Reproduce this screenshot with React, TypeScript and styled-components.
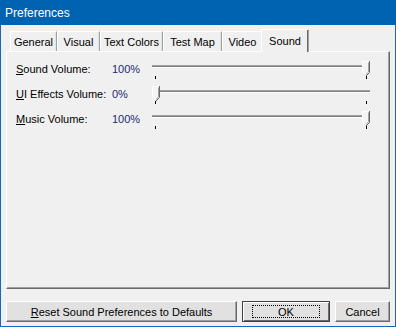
import React from "react";
import styled, { createGlobalStyle } from "styled-components";

const Global = createGlobalStyle`
    html, body { margin: 0; padding: 0; background: #f0f0f0; }
    body { font-family: "Liberation Sans", Arial, sans-serif; font-size: 11px; color: #000; }
`;

const Frame = styled.div`
    width: 396px;
    height: 327px;
    box-sizing: border-box;
    border: 1px solid #1767b4;
    border-top: none;
    background: #f0f0f0;
    display: flex;
    flex-direction: column;
`;

const TitleBar = styled.div`
    height: 27px;
    background: #0063b1;
    color: #fff;
    font-size: 12px;
    display: flex;
    align-items: center;
    padding-left: 5px;
    margin: 0 -1px;
`;

const Body = styled.div`
    flex: 1;
    display: flex;
    flex-direction: column;
    padding: 3px 5px 4px 5px;
`;

const TabStrip = styled.div`
    display: flex;
    align-items: flex-end;
    height: 23px;
    padding-left: 4px;
    position: relative;
    z-index: 1;
`;

const Tab = styled.div<{ $active?: boolean; $w: number }>`
    box-sizing: border-box;
    width: ${({ $w }) => $w}px;
    height: ${({ $active }) => ($active ? 23 : 20)}px;
    margin: ${({ $active }) => ($active ? "0 -2px -1px -2px" : "0")};
    background: #f0f0f0;
    border-top: 1px solid #fff;
    border-left: 1px solid #fff;
    border-right: 1px solid #a0a0a0;
    box-shadow: inset -1px 0 0 ${({ $active }) => ($active ? "#696969" : "#e3e3e3")};
    display: flex;
    align-items: center;
    justify-content: center;
    padding-top: ${({ $active }) => ($active ? 0 : 1)}px;
    position: relative;
    z-index: ${({ $active }) => ($active ? 2 : 1)};
`;

const Panel = styled.div`
    height: 238px;
    box-sizing: border-box;
    border-top: 1px solid #fff;
    border-left: 1px solid #fff;
    border-right: 1px solid #696969;
    border-bottom: 1px solid #696969;
    box-shadow: inset -1px -1px 0 #a0a0a0;
    padding: 9px 0 0 9px;
    display: flex;
    flex-direction: column;
    gap: 9px;
`;

const Row = styled.div`
    display: flex;
    align-items: flex-start;
    height: 16px;
`;

const Label = styled.span`
    width: 96px;
    padding-top: 2px;
`;

const Value = styled.span`
    width: 40px;
    color: #232a72;
    padding-top: 2px;
`;

const Slider = styled.div`
    position: relative;
    width: 218px;
    height: 16px;
`;

const Groove = styled.div`
    position: absolute;
    left: 0;
    right: 0;
    top: 4px;
    height: 1px;
    border-top: 1px solid #a0a0a0;
    border-bottom: 1px solid #fff;
    background: #808080;
`;

const Tick = styled.div<{ $side: "left" | "right" }>`
    position: absolute;
    top: 15px;
    ${({ $side }) => ($side === "left" ? "left: 3px;" : "right: 3px;")}
    width: 1px;
    height: 3px;
    background: #000;
`;

const Thumb = styled.svg`
    position: absolute;
    top: 0;
    width: 8px;
    height: 15px;
`;

const Mn = styled.span`
    text-decoration: underline;
`;

const Buttons = styled.div`
    margin-top: 12px;
    display: flex;
    gap: 5px;
`;

const Button = styled.button<{ $w: number; $default?: boolean }>`
    width: ${({ $w }) => $w}px;
    height: 21px;
    box-sizing: border-box;
    font: inherit;
    color: #000;
    background: #e1e1e1;
    padding: 0;
    border: 1px solid;
    border-color: ${({ $default }) =>
        $default ? "#404040" : "#fff #696969 #696969 #fff"};
    box-shadow: ${({ $default }) =>
        $default ? "inset 1px 1px 0 #fff, inset -1px -1px 0 #696969" : "inset -1px -1px 0 #a0a0a0"};
    display: flex;
    align-items: center;
    justify-content: center;
`;

const Focus = styled.span`
    border: 1px dotted #000;
    padding: 0 25px;
    height: 13px;
    box-sizing: border-box;
    display: inline-flex;
    align-items: center;
`;

function ThumbShape({ at }: { at: "min" | "max" }) {
    return (
        <Thumb viewBox="0 0 8 15" style={at === "min" ? { left: 0 } : { right: 0 }}>
            <path d="M0.5 0.5 H7.5 V11.5 L4 15 L0.5 11.5 Z" fill="#f4f4f4" />
            <path d="M0.5 11.5 V0.5 H7" fill="none" stroke="#fff" />
            <path d="M7.5 0 V11.5 L4 15" fill="none" stroke="#696969" />
            <path d="M6.5 1.5 V11 L3.8 13.7" fill="none" stroke="#a0a0a0" />
        </Thumb>
    );
}

function VolumeRow({ label, value, at }: { label: React.ReactNode; value: string; at: "min" | "max" }) {
    return (
        <Row>
            <Label>{label}</Label>
            <Value>{value}</Value>
            <Slider>
                <Groove />
                <Tick $side="left" />
                <Tick $side="right" />
                <ThumbShape at={at} />
            </Slider>
        </Row>
    );
}

const tabs: [string, number][] = [
    ["General", 47],
    ["Visual", 43],
    ["Text Colors", 63],
    ["Test Map", 59],
    ["Video", 41],
];

export default function App() {
    return (
        <>
            <Global />
            <Frame>
                <TitleBar>Preferences</TitleBar>
                <Body>
                    <TabStrip>
                        {tabs.map(([t, w]) => (
                            <Tab key={t} $w={w}>{t}</Tab>
                        ))}
                        <Tab $active $w={48}>Sound</Tab>
                    </TabStrip>
                    <Panel>
                        <VolumeRow label={<><Mn>S</Mn>ound Volume:</>} value="100%" at="max" />
                        <VolumeRow label={<><Mn>U</Mn>I Effects Volume:</>} value="0%" at="min" />
                        <VolumeRow label={<><Mn>M</Mn>usic Volume:</>} value="100%" at="max" />
                    </Panel>
                    <Buttons>
                        <Button $w={231}><span><Mn>R</Mn>eset Sound Preferences to Defaults</span></Button>
                        <Button $w={88} $default><Focus>OK</Focus></Button>
                        <Button $w={55}>Cancel</Button>
                    </Buttons>
                </Body>
            </Frame>
        </>
    );
}
